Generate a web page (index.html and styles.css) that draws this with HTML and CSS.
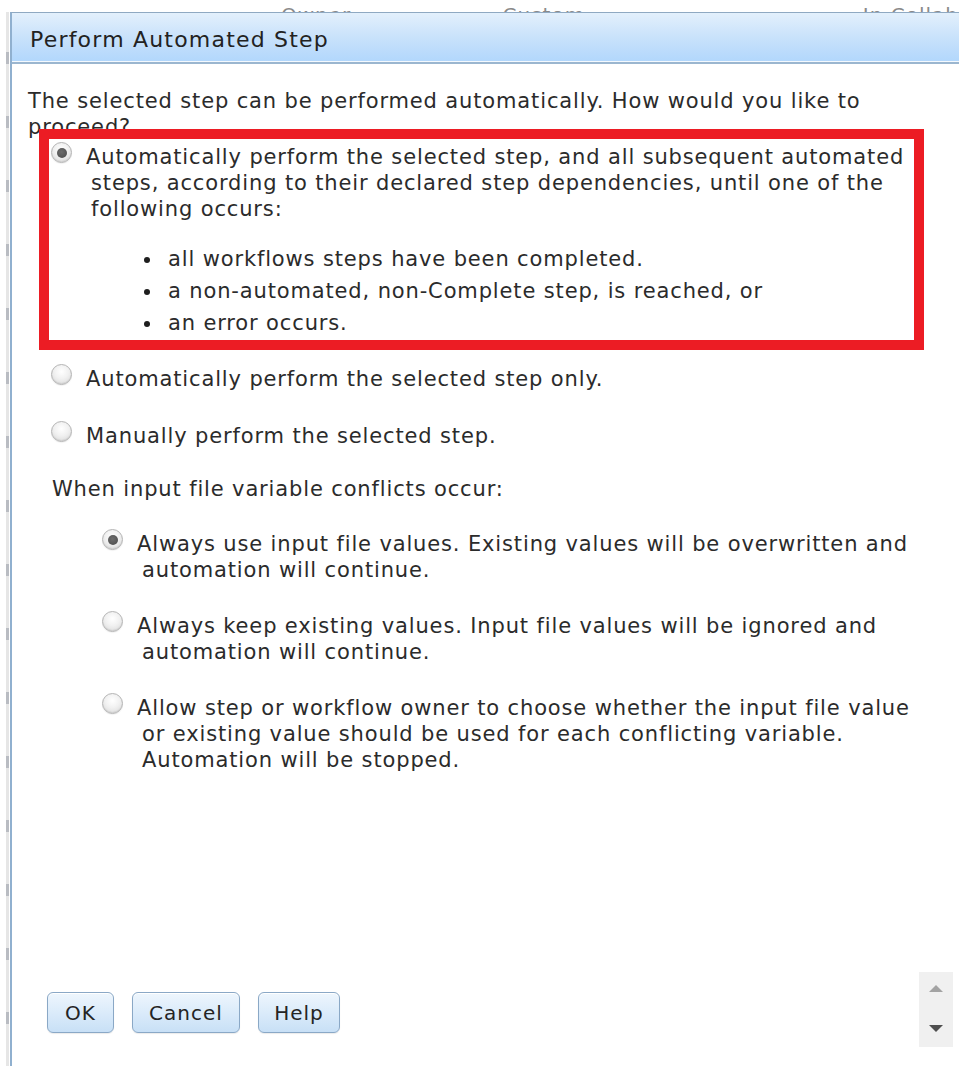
FILE: index.html
```html
<!DOCTYPE html>
<html lang="en">
<head>
<meta charset="utf-8">
<title>Perform Automated Step</title>
<link rel="stylesheet" href="styles.css">
</head>
<body>
<div class="backdrop">
  <div class="bg-header">
    <span class="bg-col bg-owner">Owner:</span>
    <span class="bg-col bg-custom">Custom:</span>
    <span class="bg-col bg-collab">In Collab</span>
  </div>
  <div class="bg-body">
    <div class="bg-edge"></div>
    <div class="dialog">
      <div class="titlebar">Perform Automated Step</div>
      <div class="content">
        <p class="intro">The selected step can be performed automatically. How would you like to proceed?</p>

        <div class="option option-main highlighted">
          <span class="radio on"></span>
          <div class="label">
            <div class="label-text">Automatically perform the selected step, and all subsequent automated steps, according to their declared step dependencies, until one of the following occurs:</div>
            <ul class="stops">
              <li>all workflows steps have been completed.</li>
              <li>a non-automated, non-Complete step, is reached, or</li>
              <li>an error occurs.</li>
            </ul>
          </div>
          <div class="highlight-box"></div>
        </div>

        <div class="option option-main">
          <span class="radio"></span>
          <div class="label"><div class="label-text">Automatically perform the selected step only.</div></div>
        </div>

        <div class="option option-main">
          <span class="radio"></span>
          <div class="label"><div class="label-text">Manually perform the selected step.</div></div>
        </div>

        <p class="conflicts">When input file variable conflicts occur:</p>

        <div class="option option-sub">
          <span class="radio on"></span>
          <div class="label"><div class="label-text">Always use input file values. Existing values will be overwritten and automation will continue.</div></div>
        </div>

        <div class="option option-sub">
          <span class="radio"></span>
          <div class="label"><div class="label-text">Always keep existing values. Input file values will be ignored and automation will continue.</div></div>
        </div>

        <div class="option option-sub">
          <span class="radio"></span>
          <div class="label"><div class="label-text">Allow step or workflow owner to choose whether the input file value or existing value should be used for each conflicting variable. Automation will be stopped.</div></div>
        </div>

        <div class="footer">
          <button class="btn btn-ok" type="button">OK</button>
          <button class="btn btn-cancel" type="button">Cancel</button>
          <button class="btn btn-help" type="button">Help</button>
          <div class="spinner">
            <span class="arrow arrow-up"></span>
            <span class="arrow arrow-down"></span>
          </div>
        </div>
      </div>
    </div>
  </div>
</div>
</body>
</html>
```

FILE: styles.css
```css
html, body {
  margin: 0;
  padding: 0;
  background: #ffffff;
  overflow: hidden;
}

body {
  font-family: "DejaVu Sans", Verdana, sans-serif;
  color: #2b2b2b;
}

.backdrop {
  height: 1066px;
  display: flex;
  flex-direction: column;
}

/* Page behind the dialog: only the top edge of its column headers shows */
.bg-header {
  height: 12px;
  overflow: hidden;
  display: flex;
  font-size: 20px;
  line-height: 20px;
  letter-spacing: 1px;
  padding-top: 5px;
  color: #8a8a8a;
  box-sizing: border-box;
}

.bg-col {
  display: block;
  white-space: nowrap;
}

.bg-owner { margin-left: 281px; width: 225px; }
.bg-custom { width: 366px; }

.bg-body {
  flex: 1;
  display: flex;
  min-height: 0;
}

.bg-edge {
  width: 10px;
  flex: none;
  background:
    repeating-linear-gradient(to bottom,
      #e6e6e6 0px, #e6e6e6 40px,
      #b9bcc2 40px, #b9bcc2 52px,
      #e6e6e6 52px, #e6e6e6 64px) 6px 0 / 3px 100% no-repeat,
    #ffffff;
}

/* Dialog window */
.dialog {
  flex: 1;
  display: flex;
  flex-direction: column;
  border-left: 2px solid #90b0cf;
  border-top: 1px solid #8fa9c2;
  background: #ffffff;
  min-width: 0;
}

.titlebar {
  height: 49px;
  box-sizing: border-box;
  padding: 4px 0 0 18px;
  line-height: 45px;
  font-size: 22px;
  letter-spacing: 1.2px;
  color: #222222;
  background: linear-gradient(to bottom, #e3f0fc 0%, #c9e2fb 50%, #b2d7fc 100%);
  border-bottom: 1px solid #f4f9fe;
  box-shadow: 0 2px 0 #9bb6cf;
  margin-bottom: 2px;
}

.content {
  flex: 1;
  display: flex;
  flex-direction: column;
  padding: 24px 0 0 15px;
  font-size: 21px;
  letter-spacing: 0.86px;
  line-height: 26px;
  min-height: 0;
}

.intro {
  margin: 0 0 0 1px;
  width: 860px;
}

.option {
  display: flex;
  align-items: flex-start;
  position: relative;
}

.option-main {
  margin-left: 24px;
  margin-top: 31px;
}

.option-main.highlighted {
  margin-top: 4px;
}

.highlighted + .option-main {
  margin-top: 27px;
}

.option-sub {
  margin-left: 75px;
  margin-top: 30px;
}

.conflicts {
  margin: 27px 0 0 25px;
}

.conflicts + .option-sub {
  margin-top: 29px;
}

.radio {
  flex: none;
  width: 19px;
  height: 19px;
  border-radius: 50%;
  border: 1px solid #b4b4b4;
  background: radial-gradient(circle at 50% 35%, #ffffff 0%, #f1f1f1 45%, #d6d6d6 100%);
  box-shadow: inset 0 -1px 1px rgba(0,0,0,0.08), 0 1px 1px rgba(0,0,0,0.06);
  position: relative;
  margin-top: -2px;
}

.radio.on::after {
  content: "";
  position: absolute;
  left: 4.5px;
  top: 4.5px;
  width: 10px;
  height: 10px;
  border-radius: 50%;
  background: radial-gradient(circle at 45% 40%, #6d6d6d 0%, #555555 70%, #777777 100%);
}

.label {
  margin-left: 14px;
  padding-left: 5px;
  text-indent: -5px;
}

.option-main .label { width: 825px; }
.option-sub .label { width: 775px; }

.stops {
  margin: 21px 0 0 0;
  padding: 0 0 0 77px;
  list-style: none;
  text-indent: 0;
  line-height: 32px;
}

.stops li {
  position: relative;
}

.stops li::before {
  content: "";
  position: absolute;
  left: -24px;
  top: 14px;
  width: 6px;
  height: 6px;
  border-radius: 50%;
  background: #1e1e1e;
}

/* Red annotation frame drawn over the first choice */
.highlight-box {
  position: absolute;
  left: -12px;
  top: -15px;
  width: 865px;
  height: 201px;
  border: 10px solid #ec1c24;
  pointer-events: none;
}

/* Button row */
.footer {
  margin-top: auto;
  display: flex;
  align-items: center;
  gap: 18px;
  padding: 0 6px 16px 20px;
}

.btn {
  font-family: "DejaVu Sans", Verdana, sans-serif;
  font-size: 20px;
  letter-spacing: 1px;
  color: #242424;
  height: 41px;
  border: 1px solid #8aa8c6;
  border-radius: 6px;
  background: linear-gradient(to bottom, #eef6fd 0%, #d9eafa 55%, #c8e0f6 100%);
  box-shadow: inset 0 1px 0 #ffffff, 0 1px 1px rgba(0,0,0,0.08);
  padding: 0;
  margin: 0;
}

.btn-ok { width: 67px; }
.btn-cancel { width: 108px; }
.btn-help { width: 82px; }

.spinner {
  margin-left: auto;
  width: 34px;
  height: 75px;
  background: #f0f0f0;
  display: flex;
  flex-direction: column;
  align-items: center;
  justify-content: space-between;
  padding: 13px 0 15px;
  box-sizing: border-box;
  transform: translateY(-3px);
}

.arrow {
  width: 0;
  height: 0;
  border-left: 7px solid transparent;
  border-right: 7px solid transparent;
}

.arrow-up { border-bottom: 7px solid #a3a3a3; }
.arrow-down { border-top: 7px solid #4f4f4f; }
```
